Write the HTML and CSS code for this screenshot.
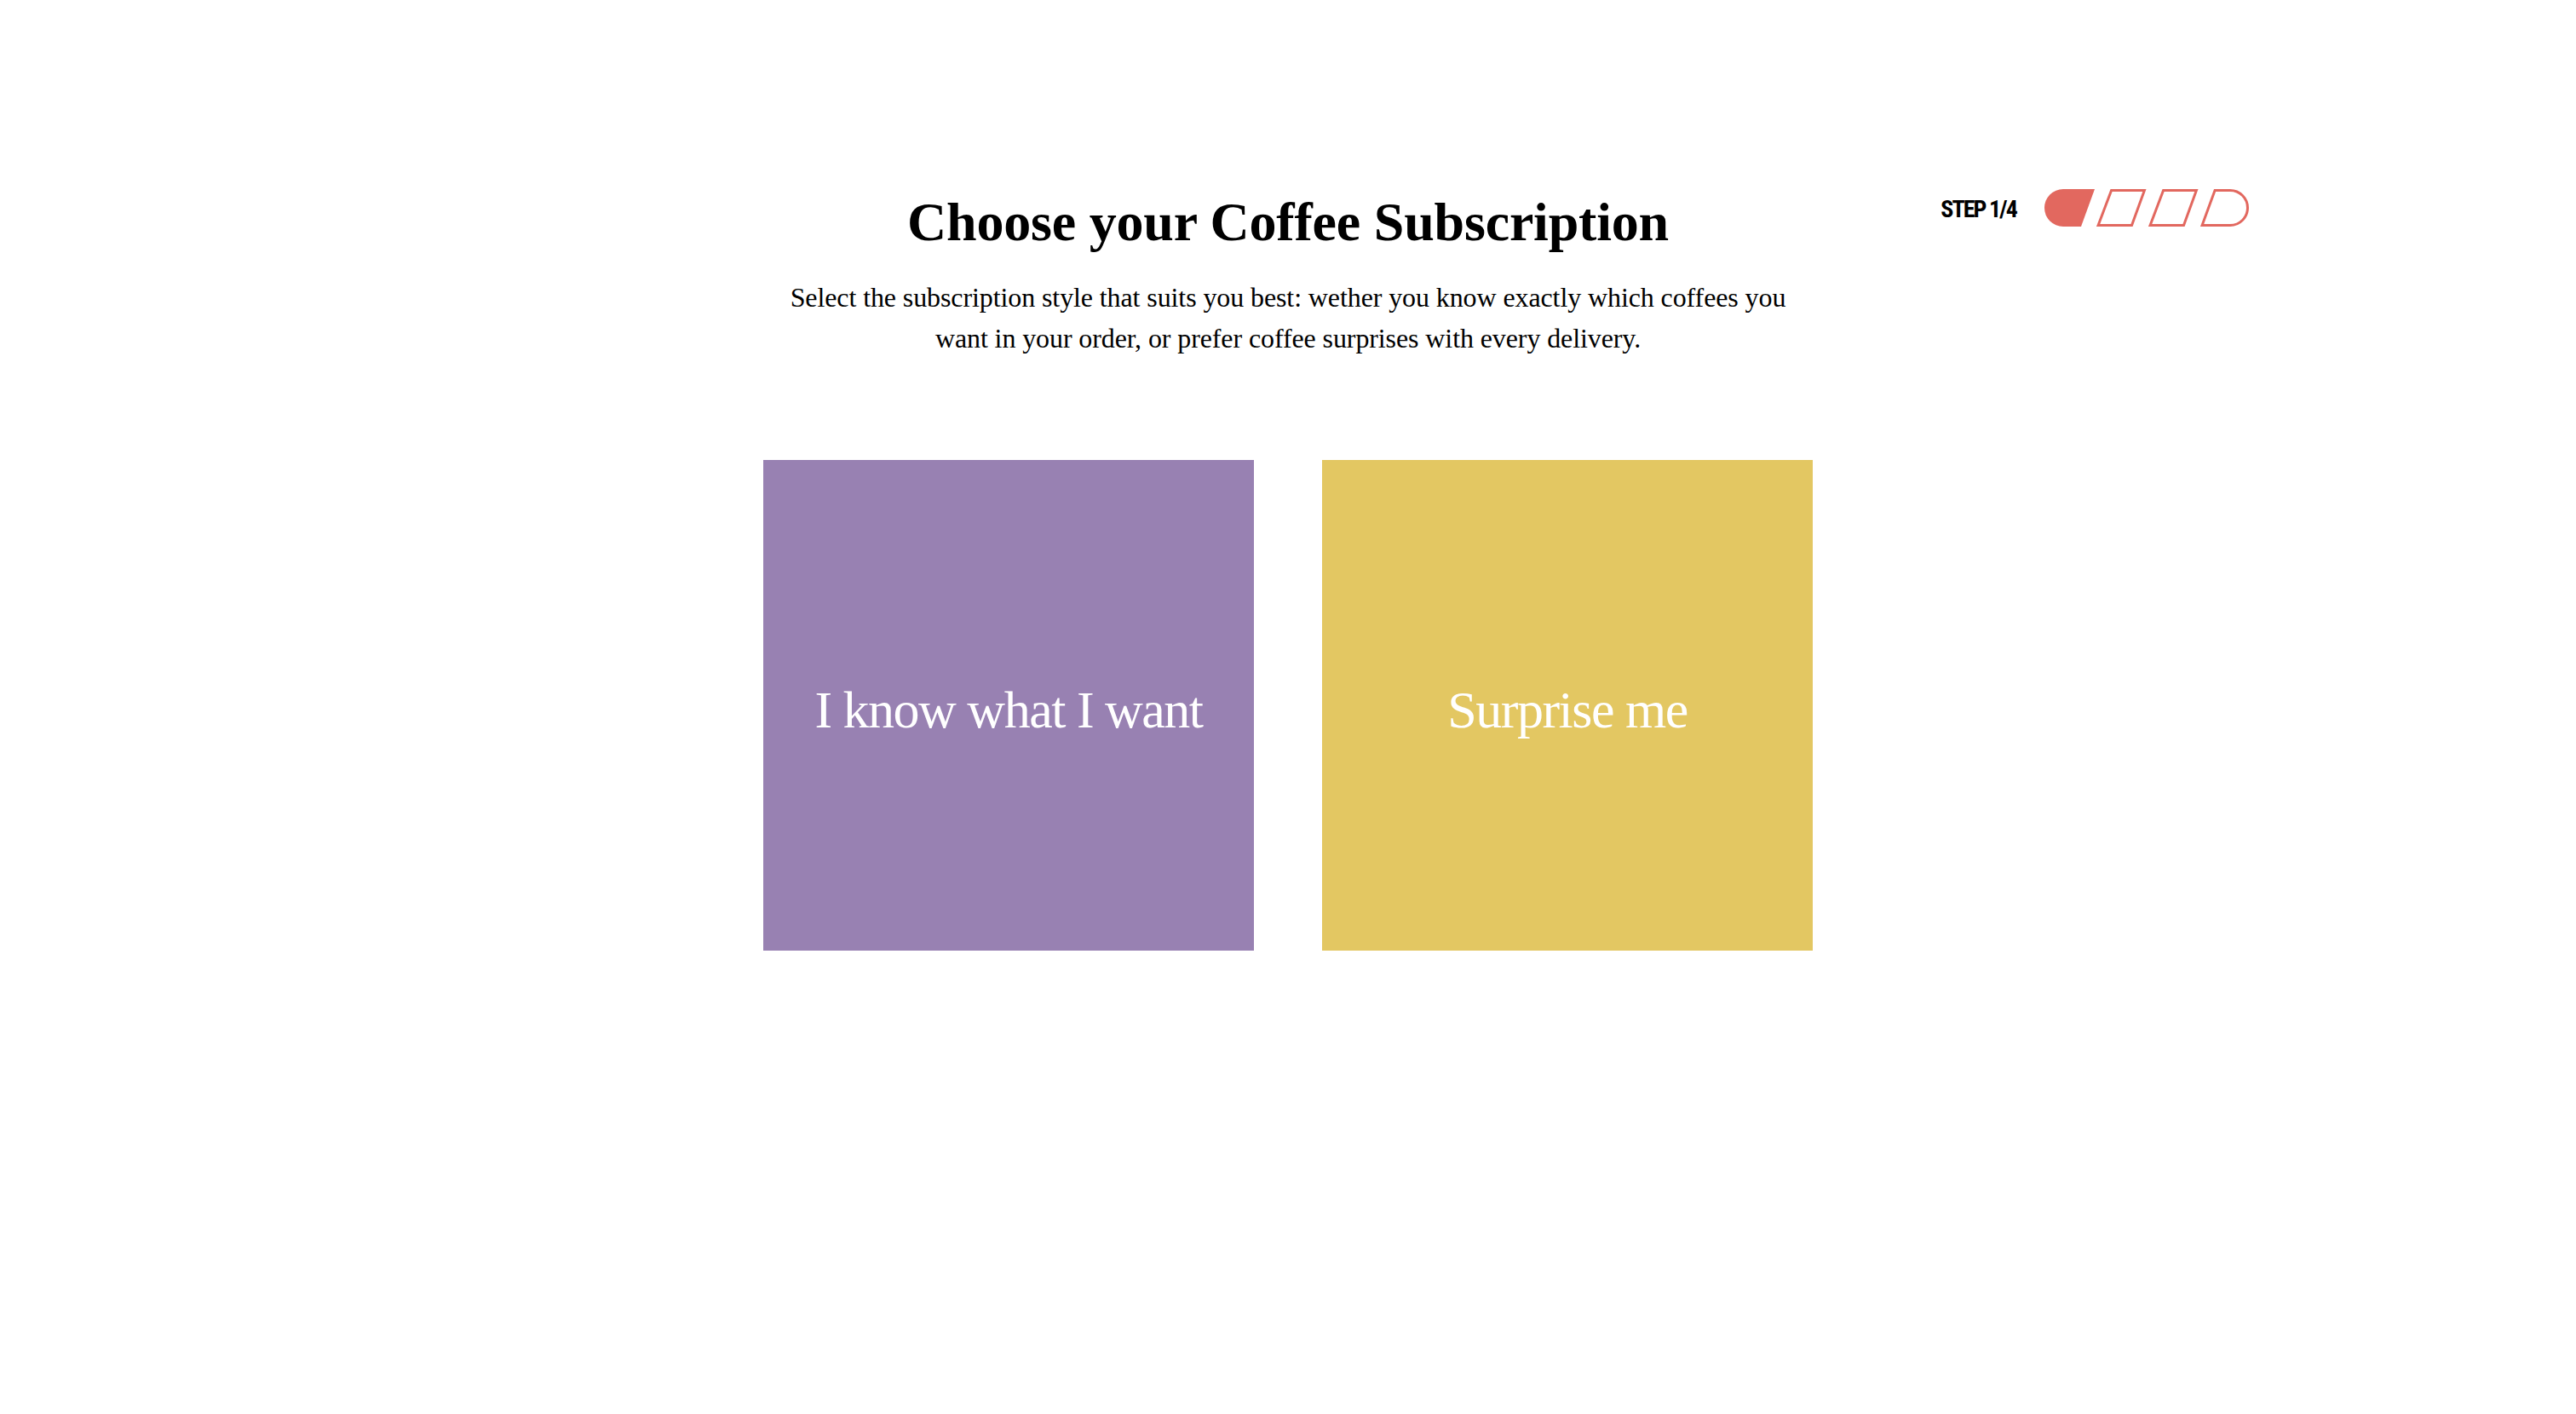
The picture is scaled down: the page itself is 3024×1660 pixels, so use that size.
FILE: index.html
```html
<!DOCTYPE html>
<html lang="en">
<head>
<meta charset="utf-8">
<title>Choose your Coffee Subscription</title>
<link rel="stylesheet" href="styles.css">
</head>
<body>
<main class="page">
  <header class="header">
    <div class="intro">
      <h1 class="title">Choose your Coffee Subscription</h1>
      <p class="subtitle">Select the subscription style that suits you best: wether you know exactly which coffees you<br>want in your order, or prefer coffee surprises with every delivery.</p>
    </div>
    <div class="step">
      <span class="step-label">STEP 1/4</span>
      <svg class="step-bar" width="240" height="44" viewBox="0 0 240 44" aria-hidden="true">
        <path d="M22 0 H59 L43 44 H22 A22 22 0 0 1 22 0 Z" fill="#E2685F"/>
        <polygon points="78.6,1.5 117.4,1.5 102.5,42.5 63.1,42.5" fill="none" stroke="#E2685F" stroke-width="3"/>
        <polygon points="139.6,1.5 178.4,1.5 163.5,42.5 124.1,42.5" fill="none" stroke="#E2685F" stroke-width="3"/>
        <path d="M200.1 1.5 H218 A20.5 20.5 0 0 1 218 42.5 H185.1 Z" fill="none" stroke="#E2685F" stroke-width="3"/>
      </svg>
    </div>
  </header>
  <section class="options">
    <a class="option option-purple" href="#">I know what I want</a>
    <a class="option option-yellow" href="#">Surprise me</a>
  </section>
</main>
</body>
</html>
```
FILE: styles.css
```css
html, body {
  margin: 0;
  padding: 0;
  background: #ffffff;
}

.page {
  padding: 0 384px;
  font-family: "Liberation Serif", "Times New Roman", serif;
  color: #000;
}

.header {
  display: grid;
  grid-template-columns: 1fr auto 1fr;
  padding-top: 229px;
}

.intro {
  grid-column: 2;
  text-align: center;
}

.title {
  margin: 0;
  font-size: 64px;
  line-height: 63px;
  font-weight: 700;
  letter-spacing: -0.2px;
}

.subtitle {
  margin: 33px 0 0;
  font-size: 32px;
  line-height: 48px;
  letter-spacing: -0.1px;
}

.step {
  grid-column: 3;
  justify-self: end;
  align-self: start;
  margin-top: -7px;
  display: flex;
  align-items: center;
  gap: 33px;
}

.step-label {
  font-family: "Liberation Sans Narrow", "Roboto Condensed", "DejaVu Sans Condensed", sans-serif;
  font-weight: 700;
  font-size: 28px;
  line-height: 1;
  letter-spacing: -1.9px;
  margin-top: 4px;
  color: #000;
}

.step-bar {
  display: block;
}

.options {
  display: flex;
  justify-content: center;
  gap: 80px;
  margin-top: 119px;
}

.option {
  box-sizing: border-box;
  width: 576px;
  height: 576px;
  padding-top: 10px;
  display: flex;
  align-items: center;
  justify-content: center;
  color: #fff;
  text-decoration: none;
  font-size: 62px;
  letter-spacing: -1.5px;
}

.option-purple {
  background: #9881B2;
}

.option-yellow {
  background: #E3C762;
}
```
